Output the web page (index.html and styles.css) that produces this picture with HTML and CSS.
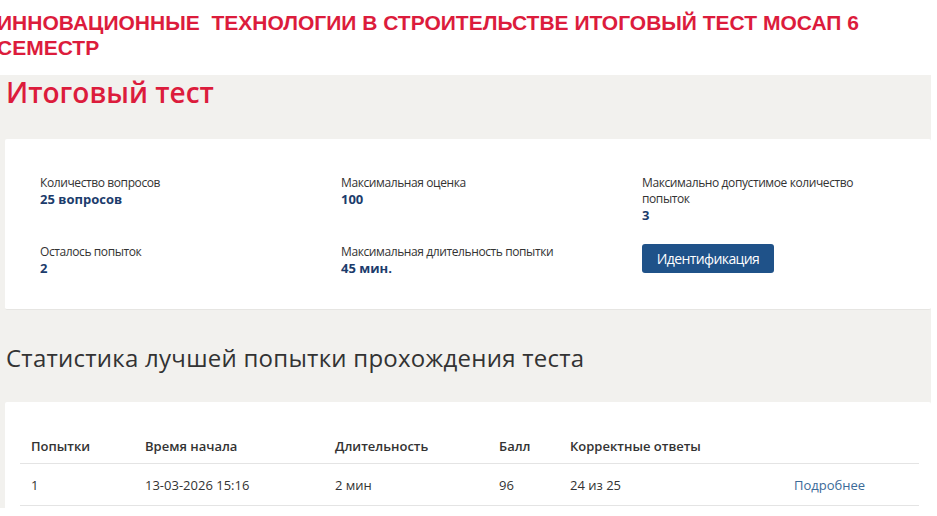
FILE: index.html
```html
<!DOCTYPE html>
<html lang="ru">
<head>
<meta charset="utf-8">
<title>Итоговый тест</title>
<link rel="stylesheet" href="styles.css">
</head>
<body>
<h1 class="course-title">ИННОВАЦИОННЫЕ &nbsp;ТЕХНОЛОГИИ В СТРОИТЕЛЬСТВЕ ИТОГОВЫЙ ТЕСТ МОСАП 6 СЕМЕСТР</h1>
<main class="panel">
  <h2 class="test-title">Итоговый тест</h2>
  <section class="card info-card">
    <div class="info-grid">
      <div class="info-item">
        <div class="label">Количество вопросов</div>
        <div class="value">25 вопросов</div>
      </div>
      <div class="info-item">
        <div class="label">Максимальная оценка</div>
        <div class="value">100</div>
      </div>
      <div class="info-item">
        <div class="label">Максимально допустимое количество попыток</div>
        <div class="value">3</div>
      </div>
      <div class="info-item">
        <div class="label">Осталось попыток</div>
        <div class="value">2</div>
      </div>
      <div class="info-item">
        <div class="label">Максимальная длительность попытки</div>
        <div class="value">45 мин.</div>
      </div>
      <div class="info-item">
        <button class="btn">Идентификация</button>
      </div>
    </div>
  </section>
  <h2 class="stats-title">Статистика лучшей попытки прохождения теста</h2>
  <section class="card table-card">
    <table class="stats">
      <thead>
        <tr>
          <th class="c1">Попытки</th>
          <th class="c2">Время начала</th>
          <th class="c3">Длительность</th>
          <th class="c4">Балл</th>
          <th class="c5">Корректные ответы</th>
          <th class="c6"></th>
        </tr>
      </thead>
      <tbody>
        <tr>
          <td>1</td>
          <td>13-03-2026 15:16</td>
          <td>2 мин</td>
          <td>96</td>
          <td>24 из 25</td>
          <td><a class="more" href="#">Подробнее</a></td>
        </tr>
      </tbody>
    </table>
  </section>
</main>
</body>
</html>
```
FILE: styles.css
```css
html, body {
  margin: 0;
  padding: 0;
  background: #ffffff;
}
body {
  width: 937px;
  height: 516px;
  overflow: hidden;
  font-family: "Open Sans", "Noto Sans", sans-serif;
  color: #333333;
}
.course-title {
  font-family: "Liberation Sans", Arial, sans-serif;
  font-weight: bold;
  font-size: 21px;
  line-height: 25px;
  color: #dc1c3c;
  margin: 0 0 0 -3px;
  padding-top: 10px;
  width: 875px;
  height: 75px;
  box-sizing: border-box;
}
.panel {
  background: #f2f1ee;
  width: 931px;
  height: 433px;
  padding: 0;
  overflow: hidden;
}
.test-title {
  margin: 0;
  padding: 0 0 0 6px;
  height: 64px;
  font-size: 28px;
  line-height: 34px;
  font-weight: 600;
  color: #dc1c3c;
}
.card {
  background: #ffffff;
  margin-left: 5px;
  border-radius: 2px;
}
.info-card {
  height: 171px;
  border-bottom: 1px solid #e6e5e2;
  box-sizing: border-box;
  padding: 36px 0 0 35px;
}
.info-grid {
  display: grid;
  grid-template-columns: 301px 301px 240px;
  grid-template-rows: 69px 60px;
}
.label {
  font-size: 12px;
  line-height: 16px;
  letter-spacing: -0.4px;
  color: #333333;
}
.value {
  font-size: 13px;
  line-height: 16px;
  font-weight: 700;
  color: #1c3c6c;
}
.btn {
  margin-top: 0;
  width: 132px;
  height: 29px;
  background: #1f5289;
  color: #ffffff;
  border: none;
  border-radius: 3px;
  font-family: "Open Sans", "Noto Sans", sans-serif;
  font-size: 14px;
  letter-spacing: -0.6px;
  padding: 0;
}
.stats-title {
  margin: 0;
  padding: 3px 0 0 6px;
  height: 92px;
  box-sizing: border-box;
  display: flex;
  align-items: center;
  font-size: 24px;
  font-weight: 400;
  letter-spacing: 0.25px;
  color: #333333;
}
.table-card {
  height: 106px;
  padding: 27px 12px 0 15px;
}
.stats {
  border-collapse: collapse;
  width: 899px;
  font-size: 13px;
}
.stats th {
  text-align: left;
  font-weight: 600;
  color: #333333;
  height: 34px;
  padding: 0 0 0 11px;
  border-bottom: 1px solid #e4e4e4;
}
.stats td {
  height: 41px;
  padding: 0 0 0 11px;
  border-bottom: 1px solid #e4e4e4;
  color: #333333;
}
.c1 { width: 103px; }
.c2 { width: 179px; }
.c3 { width: 153px; }
.c4 { width: 60px; }
.c5 { width: 213px; }
.more {
  color: #3b6a98;
  text-decoration: none;
}
```
